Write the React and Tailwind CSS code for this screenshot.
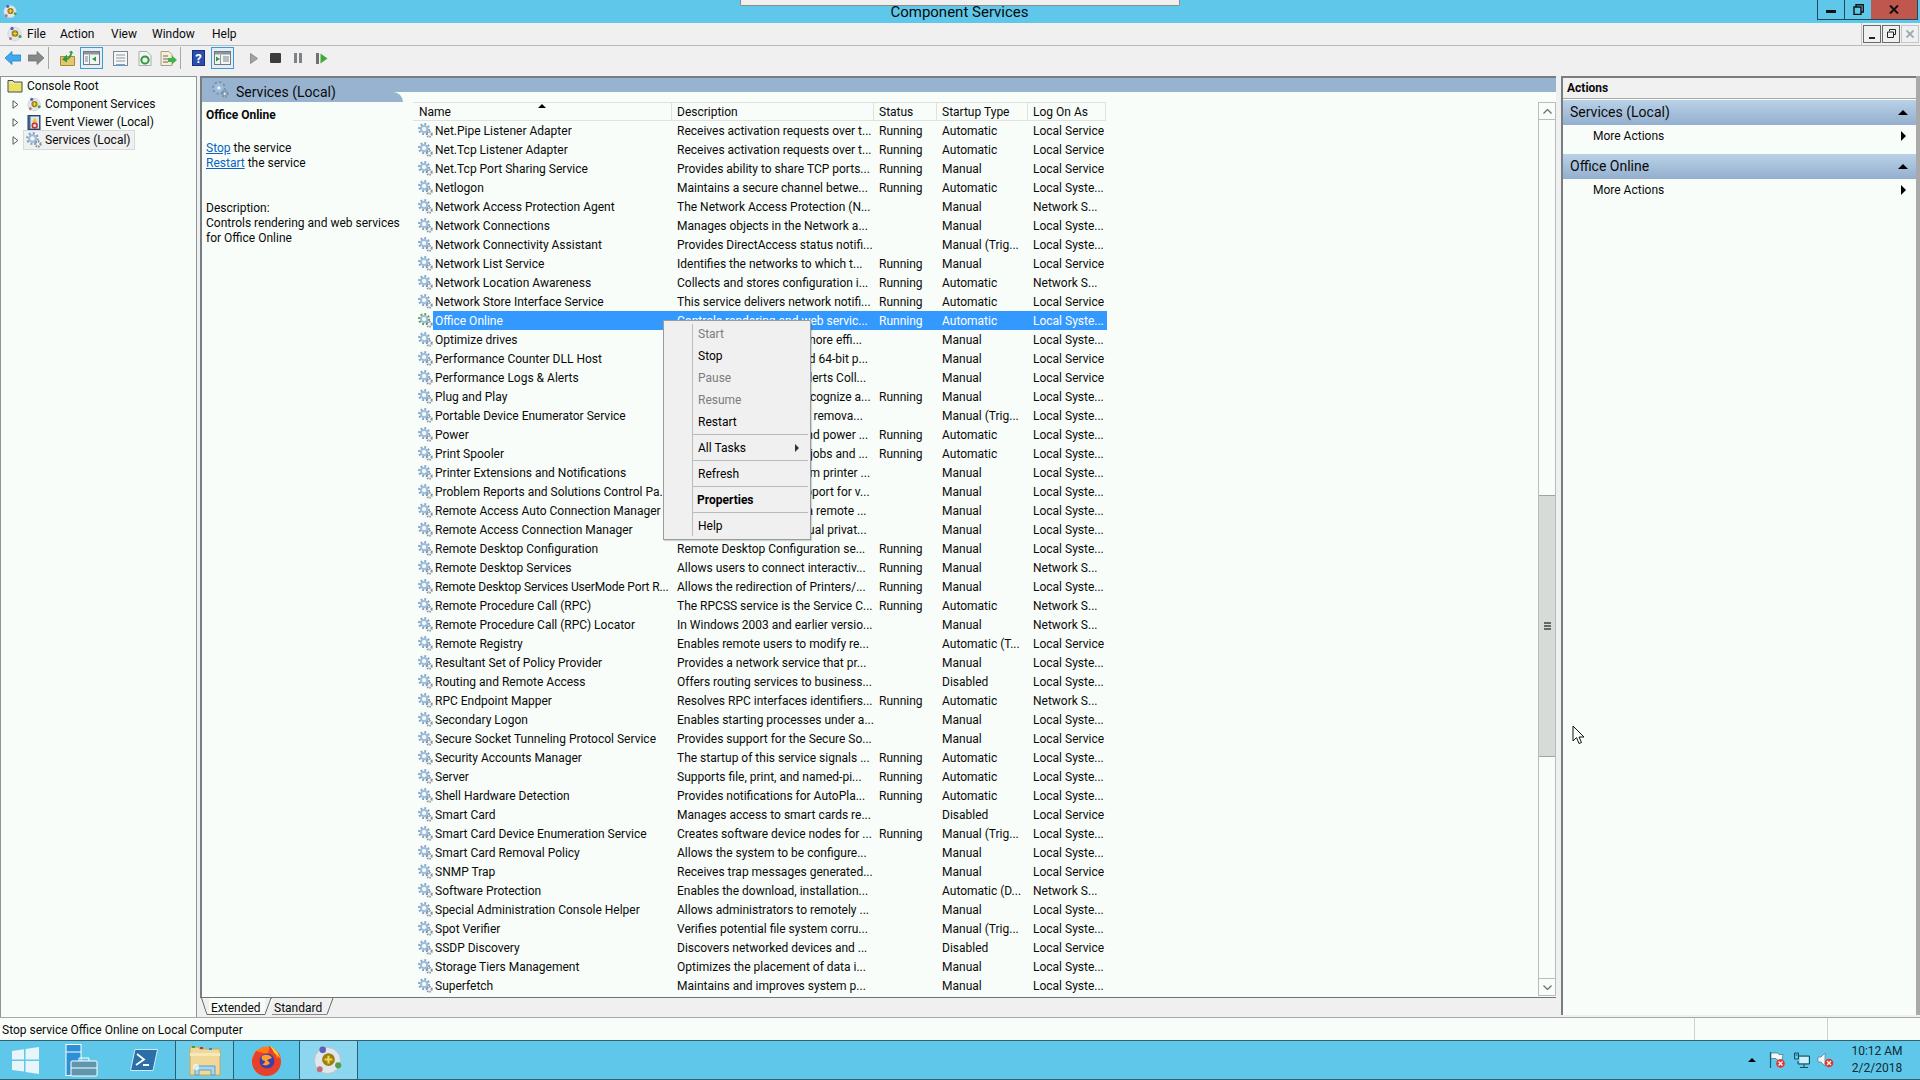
const services = [
  ["Net.Pipe Listener Adapter", "Receives activation requests over t...", "Running", "Automatic", "Local Service"],
  ["Net.Tcp Listener Adapter", "Receives activation requests over t...", "Running", "Automatic", "Local Service"],
  ["Net.Tcp Port Sharing Service", "Provides ability to share TCP ports...", "Running", "Manual", "Local Service"],
  ["Netlogon", "Maintains a secure channel betwe...", "Running", "Automatic", "Local Syste..."],
  ["Network Access Protection Agent", "The Network Access Protection (N...", "", "Manual", "Network S..."],
  ["Network Connections", "Manages objects in the Network a...", "", "Manual", "Local Syste..."],
  ["Network Connectivity Assistant", "Provides DirectAccess status notifi...", "", "Manual (Trig...", "Local Syste..."],
  ["Network List Service", "Identifies the networks to which t...", "Running", "Manual", "Local Service"],
  ["Network Location Awareness", "Collects and stores configuration i...", "Running", "Automatic", "Network S..."],
  ["Network Store Interface Service", "This service delivers network notifi...", "Running", "Automatic", "Local Service"],
  ["Office Online", "Controls rendering and web servic...", "Running", "Automatic", "Local Syste..."],
  ["Optimize drives", "Helps the computer run more effi...", "", "Manual", "Local Syste..."],
  ["Performance Counter DLL Host", "Enables remote users and 64-bit p...", "", "Manual", "Local Service"],
  ["Performance Logs & Alerts", "Performance Logs and Alerts Coll...", "", "Manual", "Local Service"],
  ["Plug and Play", "Enables a computer to recognize a...", "Running", "Manual", "Local Syste..."],
  ["Portable Device Enumerator Service", "Enforces group policy for remova...", "", "Manual (Trig...", "Local Syste..."],
  ["Power", "Manages power policy and power ...", "Running", "Automatic", "Local Syste..."],
  ["Print Spooler", "This service spools print jobs and ...", "Running", "Automatic", "Local Syste..."],
  ["Printer Extensions and Notifications", "This service opens custom printer ...", "", "Manual", "Local Syste..."],
  ["Problem Reports and Solutions Control Pa...", "This service provides support for v...", "", "Manual", "Local Syste..."],
  ["Remote Access Auto Connection Manager", "Creates a connection to a remote ...", "", "Manual", "Local Syste..."],
  ["Remote Access Connection Manager", "Manages dial-up and virtual privat...", "", "Manual", "Local Syste..."],
  ["Remote Desktop Configuration", "Remote Desktop Configuration se...", "Running", "Manual", "Local Syste..."],
  ["Remote Desktop Services", "Allows users to connect interactiv...", "Running", "Manual", "Network S..."],
  ["Remote Desktop Services UserMode Port R...", "Allows the redirection of Printers/...", "Running", "Manual", "Local Syste..."],
  ["Remote Procedure Call (RPC)", "The RPCSS service is the Service C...", "Running", "Automatic", "Network S..."],
  ["Remote Procedure Call (RPC) Locator", "In Windows 2003 and earlier versio...", "", "Manual", "Network S..."],
  ["Remote Registry", "Enables remote users to modify re...", "", "Automatic (T...", "Local Service"],
  ["Resultant Set of Policy Provider", "Provides a network service that pr...", "", "Manual", "Local Syste..."],
  ["Routing and Remote Access", "Offers routing services to business...", "", "Disabled", "Local Syste..."],
  ["RPC Endpoint Mapper", "Resolves RPC interfaces identifiers...", "Running", "Automatic", "Network S..."],
  ["Secondary Logon", "Enables starting processes under a...", "", "Manual", "Local Syste..."],
  ["Secure Socket Tunneling Protocol Service", "Provides support for the Secure So...", "", "Manual", "Local Service"],
  ["Security Accounts Manager", "The startup of this service signals ...", "Running", "Automatic", "Local Syste..."],
  ["Server", "Supports file, print, and named-pi...", "Running", "Automatic", "Local Syste..."],
  ["Shell Hardware Detection", "Provides notifications for AutoPla...", "Running", "Automatic", "Local Syste..."],
  ["Smart Card", "Manages access to smart cards re...", "", "Disabled", "Local Service"],
  ["Smart Card Device Enumeration Service", "Creates software device nodes for ...", "Running", "Manual (Trig...", "Local Syste..."],
  ["Smart Card Removal Policy", "Allows the system to be configure...", "", "Manual", "Local Syste..."],
  ["SNMP Trap", "Receives trap messages generated...", "", "Manual", "Local Service"],
  ["Software Protection", "Enables the download, installation...", "", "Automatic (D...", "Network S..."],
  ["Special Administration Console Helper", "Allows administrators to remotely ...", "", "Manual", "Local Syste..."],
  ["Spot Verifier", "Verifies potential file system corru...", "", "Manual (Trig...", "Local Syste..."],
  ["SSDP Discovery", "Discovers networked devices and ...", "", "Disabled", "Local Service"],
  ["Storage Tiers Management", "Optimizes the placement of data i...", "", "Manual", "Local Syste..."],
  ["Superfetch", "Maintains and improves system p...", "", "Manual", "Local Syste..."],
];

const columns = [
  { label: "Name", cls: "w-[259px] pl-[6px]" },
  { label: "Description", cls: "w-[202px] pl-[5px]" },
  { label: "Status", cls: "w-[63px] pl-[5px]" },
  { label: "Startup Type", cls: "w-[91px] pl-[5px]" },
  { label: "Log On As", cls: "w-[78px] pl-[5px]" },
];

function Gear({ size = 14, accent = "#7fa3c8", small = "#7f8f9c" }) {
  return (
    <svg width={size} height={size} viewBox="0 0 16 16" className="shrink-0">
      <circle cx="6.5" cy="6.5" r="5.3" fill="none" stroke={accent} strokeWidth="2.2" strokeDasharray="2 2.1" />
      <circle cx="6.5" cy="6.5" r="3.4" fill="none" stroke="#9fbcdb" strokeWidth="2.2" />
      <circle cx="6.5" cy="6.5" r="1.6" fill="#f4f9fc" />
      <circle cx="12" cy="12" r="2.6" fill="none" stroke={small} strokeWidth="2.2" strokeDasharray="1.4 1" />
      <circle cx="12" cy="12" r="0.9" fill="#f4f9fc" />
    </svg>
  );
}

function ComponentIcon({ size = 16 }) {
  return (
    <svg width={size} height={size} viewBox="0 0 32 32" className="shrink-0">
      <circle cx="15" cy="16" r="13.5" fill="#dfe6ec" stroke="#b9c3cc" />
      <circle cx="10" cy="5" r="3.4" fill="#5d5fb8" />
      <circle cx="26" cy="21" r="3.2" fill="#4f9e4a" />
      <circle cx="7" cy="25" r="3" fill="#c26d78" />
      <circle cx="16" cy="15" r="6.6" fill="#9a8212" />
      <path d="M16 11v8M12 15h8" stroke="#f5d84a" strokeWidth="2.2" />
    </svg>
  );
}

function Folder() {
  return (
    <svg width="16" height="14" viewBox="0 0 16 14" className="shrink-0">
      <path d="M1 3V1.5h5L7 3h8v10H1z" fill="#e9e2a8" stroke="#4a4a3a" />
      <rect x="2" y="5" width="12" height="7" fill="#e8e35a" />
    </svg>
  );
}

function EventIcon() {
  return (
    <svg width="14" height="15" viewBox="0 0 14 15" className="shrink-0">
      <rect x="1" y="0.5" width="12" height="14" fill="#41689c" stroke="#2a4066" />
      <rect x="3.5" y="1.5" width="8.5" height="12" fill="#dfe6ef" />
      <path d="M7.7 2.5l2.6 4.5H5.1z" fill="#efc232" />
      <circle cx="7.7" cy="10.5" r="2.4" fill="none" stroke="#c8352c" strokeWidth="1.6" />
    </svg>
  );
}

function Expander() {
  return (
    <svg width="7" height="9" viewBox="0 0 7 9" className="shrink-0">
      <path d="M1 .7v7.6L5.8 4.5z" fill="#fff" stroke="#555" />
    </svg>
  );
}

function TreeRow({ icon, label, selected }) {
  return (
    <div className="h-[18px] flex items-center pl-[11px]">
      <Expander />
      <span className="w-[5px]" />
      <div className={`flex items-center h-[18px] pl-[2px] pr-[3px] ${selected ? "bg-[#f0f0f0] outline outline-[#d9d9d9]" : ""}`}>
        <span className="w-[16px] mr-[3px] flex justify-center">{icon}</span>
        {label}
      </div>
    </div>
  );
}

function ToolBox({ children }) {
  return (
    <div className="w-[23px] h-[22px] flex items-center justify-center border border-[#3c9bd2] bg-[#e4eef6]">
      {children}
    </div>
  );
}

function PaneIcon({ side }) {
  return (
    <svg width="17" height="14" viewBox="0 0 17 14">
      <rect x="0.5" y="0.5" width="16" height="13" fill="#f4f4f4" stroke="#6e7a82" />
      <rect x="1" y="1" width="15" height="2.5" fill="#8a969e" />
      <path d="M6.5 4v9" stroke="#8a969e" />
      {side === "left" ? (
        <>
          <path d="M2 6h3M2 8h3M2 10h3" stroke="#7b8790" />
          <path d="M13 5.5v5l-4-2.5z" fill="#2f9a3c" />
        </>
      ) : (
        <>
          <path d="M2 5.5v5l4-2.5z" fill="#2f9a3c" />
          <path d="M9 6h6M9 8h6M9 10h6" stroke="#7b8790" />
        </>
      )}
    </svg>
  );
}

function Toolbar() {
  return (
    <div className="h-[30px] flex items-center bg-[#f0f0f0] pl-[5px] pb-[6px] shrink-0">
      <svg width="16" height="14" viewBox="0 0 16 14">
        <path d="M0 7l7-6.5V4h9v6H7v3.5z" fill="#3fa9ef" stroke="#1d78c0" strokeWidth=".7" />
      </svg>
      <svg width="16" height="14" viewBox="0 0 16 14" className="ml-[7px]">
        <path d="M16 7L9 .5V4H0v6h9v3.5z" fill="#85898a" stroke="#6a6e6f" strokeWidth=".7" />
      </svg>
      <div className="w-px h-[22px] bg-[#a8a8a8] ml-[4px]" />
      <svg width="15" height="15" viewBox="0 0 15 15" className="ml-[11px]">
        <path d="M.5 5.5h14v9H.5z" fill="#e7c66c" stroke="#a48a3c" />
        <path d="M3 9L8 4V7.5C10 7 11 4 11.5 2L9.5 2 12.5 0 14.5 3l-1.500-.5C13 6 10 9 8 9.500V12z" fill="#2e9a3e" transform="translate(-1,-0.5)" />
      </svg>
      <div className="ml-[5px]"><ToolBox><PaneIcon side="left" /></ToolBox></div>
      <svg width="15" height="15" viewBox="0 0 15 15" className="ml-[10px]">
        <rect x="0.5" y="0.5" width="14" height="14" fill="#f6f6f6" stroke="#7a868e" />
        <path d="M3 4h9M3 7h9M3 10h9" stroke="#8b979f" />
        <rect x="3" y="13" width="9" height="1.500" fill="#6ba6d3" />
      </svg>
      <svg width="14" height="15" viewBox="0 0 14 15" className="ml-[10px]">
        <path d="M1 .5h8l4 4v10H1z" fill="#f4f4f4" stroke="#a7adb2" />
        <circle cx="7" cy="9" r="3.600" fill="none" stroke="#2f9a3c" strokeWidth="2" />
      </svg>
      <svg width="17" height="15" viewBox="0 0 17 15" className="ml-[8px]">
        <path d="M1 .5h8l3 3v11H1z" fill="#f6efd6" stroke="#a7a08a" />
        <path d="M3 5h5M3 8h5M3 11h5" stroke="#666" />
        <path d="M8 7h4V4.500L17 9l-5 4.500V11H8z" fill="#47b04b" />
      </svg>
      <div className="w-px h-[22px] bg-[#a8a8a8] ml-[3px]" />
      <div className="ml-[11px] w-[13px] h-[16px] bg-[#2b4fb0] border border-[#1c2f78] flex items-center justify-center text-white text-[13px] font-bold leading-none">?</div>
      <div className="ml-[6px]"><ToolBox><PaneIcon side="right" /></ToolBox></div>
      <svg width="8" height="11" viewBox="0 0 8 11" className="ml-[16px]">
        <path d="M.5.5v10L7.500 5.500z" fill="#a0a4a6" stroke="#8a8e90" />
      </svg>
      <div className="ml-[12px] w-[11px] h-[10px] bg-[#3c3c3c] rounded-[1px]" />
      <div className="ml-[13px] w-[8px] h-[10px] flex justify-between">
        <span className="w-[3px] bg-[#7c8286]" />
        <span className="w-[3px] bg-[#7c8286]" />
      </div>
      <svg width="12" height="11" viewBox="0 0 12 11" className="ml-[14px]">
        <rect x="0" y="0" width="3" height="11" fill="#6c7276" />
        <path d="M4.500.5v10l7-5z" fill="#3cab3c" />
      </svg>
    </div>
  );
}

function ServiceRow({ row }) {
  const selected = row[0] === "Office Online";
  const tight = row[0].includes("UserMode");
  const cell = `shrink-0 h-[19px] flex items-center pl-[5px] ${selected ? "bg-[#3399ff]" : ""}`;
  return (
    <div className={`flex h-[19px] items-center whitespace-nowrap ${selected ? "text-white" : ""}`}>
      <div className="w-[259px] flex items-center shrink-0">
        <span className="w-[5px] shrink-0" />
        <Gear size={15} accent={selected ? "#58a048" : "#7fa3c8"} />
        <span className={`flex-1 h-[19px] flex items-center pl-[2px] ${selected ? "bg-[#3399ff]" : ""} ${tight ? "tracking-[-0.15px]" : ""}`}>{row[0]}</span>
      </div>
      <div className={`w-[202px] ${cell}`}>{row[1]}</div>
      <div className={`w-[63px] ${cell}`}>{row[2]}</div>
      <div className={`w-[91px] ${cell}`}>{row[3]}</div>
      <div className={`w-[79px] ${cell}`}>{row[4]}</div>
    </div>
  );
}

function ScrollBar() {
  return (
    <div className="w-[18px] shrink-0 border-x border-[#b9bdb9] flex flex-col mt-[10px] mb-px">
      <div className="h-[18px] border-y border-[#b9bdb9] flex items-center justify-center">
        <svg width="9" height="5" viewBox="0 0 9 5"><path d="M.5 4.500l4-4 4 4" fill="none" stroke="#6f6f6f" strokeWidth="1.300" /></svg>
      </div>
      <div className="h-[375px]" />
      <div className="h-[262px] bg-[#d7dbd8] border-y border-[#a0a3a0] flex items-center justify-center">
        <div className="w-[7px] flex flex-col gap-px">
          <span className="h-[2px] bg-[#666]" />
          <span className="h-[2px] bg-[#666]" />
          <span className="h-[2px] bg-[#666]" />
        </div>
      </div>
      <div className="flex-1" />
      <div className="h-[18px] border-y border-[#b9bdb9] flex items-center justify-center">
        <svg width="9" height="5" viewBox="0 0 9 5"><path d="M.5.5l4 4 4-4" fill="none" stroke="#6f6f6f" strokeWidth="1.300" /></svg>
      </div>
    </div>
  );
}

function MenuItem({ label, disabled, bold, arrow, tall }) {
  return (
    <div className={`flex items-center justify-between pr-[11px] ${tall ? "h-[23px]" : "h-[22px]"} ${disabled ? "text-[#7d7d7d]" : ""} ${bold ? "font-bold pl-[4px]" : "pl-[5px]"}`}>
      {label}
      {arrow && <span className="w-0 h-0 border-y-[4px] border-y-transparent border-l-[4px] border-l-[#333]" />}
    </div>
  );
}

function MenuSep() {
  return <div className="h-px bg-[#b9b9b9] my-[1px] mr-[2px]" />;
}

function ContextMenu() {
  return (
    <div className="absolute left-[663px] top-[320px] w-[148px] h-[220px] bg-[#f0f0f0] border border-[#9b9b9b] text-black shadow-[1px_1px_1px_rgba(0,0,0,0.15)] flex">
      <div className="w-[29px] shrink-0 border-r border-[#bcbcbc] my-[3px]" />
      <div className="flex-1 pt-[2px] flex flex-col">
        <MenuItem label="Start" disabled />
        <MenuItem label="Stop" />
        <MenuItem label="Pause" disabled />
        <MenuItem label="Resume" disabled />
        <MenuItem label="Restart" />
        <MenuSep />
        <MenuItem label="All Tasks" arrow tall />
        <MenuSep />
        <MenuItem label="Refresh" tall />
        <MenuSep />
        <MenuItem label="Properties" bold tall />
        <MenuSep />
        <MenuItem label="Help" tall />
      </div>
    </div>
  );
}

function ActionSection({ title }) {
  return (
    <div className="flex flex-col">
      <div className="h-[25px] flex items-center justify-between pl-[7px] pr-[8px] text-[14px] bg-gradient-to-b from-[#b9d2e8] to-[#94afce]">
        {title}
        <span className="w-0 h-0 border-x-[5px] border-x-transparent border-b-[5px] border-b-black" />
      </div>
      <div className="h-[29px] pb-[7px] flex items-center justify-between pl-[30px] pr-[10px]">
        More Actions
        <span className="w-0 h-0 border-y-[5px] border-y-transparent border-l-[5px] border-l-black" />
      </div>
    </div>
  );
}

function TaskSlot({ active, children }) {
  return (
    <div className={`w-[59px] h-full flex items-center justify-center ${active === "a" ? "bg-[#6ecde9] border-x border-[#2c5f70]" : ""} ${active === "b" ? "bg-[#8dd6ef] border-x border-[#2c5f70]" : ""}`}>
      {children}
    </div>
  );
}

function Taskbar() {
  return (
    <div className="h-[40px] shrink-0 bg-[#5fc8ea] border-y border-[#35616f] flex items-center">
      <div className="w-[50px] h-full flex items-center justify-center">
        <svg width="27" height="27" viewBox="0 0 27 27">
          <path d="M0 4l12-1.800v10.300H0zM13.500 2L27 0v12.500H13.500zM0 14h12v10.500L0 23zM13.500 14H27v13l-13.500-2z" fill="#e8f6fb" />
        </svg>
      </div>
      <div className="w-[62px] h-full flex items-center justify-center">
        <svg width="33" height="33" viewBox="0 0 33 33">
          <rect x="1" y="0.500" width="15" height="31" fill="#2d8fd5" stroke="#fff" />
          <path d="M1 8h15" stroke="#fff" />
          <rect x="6" y="17" width="26" height="15" rx="1" fill="#5f96ad" stroke="#fff" />
          <path d="M14 17v-3h10v3M6 24h26" fill="none" stroke="#fff" />
        </svg>
      </div>
      <div className="w-[63px] h-full flex items-center justify-center">
        <svg width="28" height="22" viewBox="0 0 28 22">
          <path d="M5 0.500h22.500L23 21.500H.5z" fill="#2a6fa8" stroke="#cfe8f5" />
          <path d="M7 5l7 5.500L6 16M13 16h6" fill="none" stroke="#fff" strokeWidth="1.800" />
        </svg>
      </div>
      <TaskSlot active="a">
        <svg width="32" height="32" viewBox="0 0 32 32">
          <path d="M1 3h8l2 2h20v26H1z" fill="#efd89a" stroke="#c8a858" />
          <rect x="3" y="2" width="3" height="2" fill="#3aa63a" />
          <rect x="11" y="3" width="3" height="2" fill="#c8352c" />
          <rect x="20" y="4" width="3" height="2" fill="#2d8fd5" />
          <path d="M1 9h30v3H1z" fill="#f7e8b8" />
          <path d="M6 31V22h20v9h-4v-5H10v5z" fill="#a8d6ee" stroke="#5b9ec2" />
          <circle cx="7" cy="23" r="3" fill="#fff" opacity=".7" />
        </svg>
      </TaskSlot>
      <div className="w-[65px] h-full flex items-center justify-center">
        <svg width="31" height="31" viewBox="0 0 31 31">
          <circle cx="15.500" cy="16" r="14.500" fill="#ff7a1a" />
          <path d="M5 6C3 10 1 13 1 16c0 9 6.500 15 14.500 15S30 25 30 16c0-3-1-6-3-9 1 4-1 7-1 7-1-6-5-11-8-14 1 4 0 7-2 9z" fill="#e8402a" />
          <path d="M18 0c5 3 10 8 12 15-2-4-5-6-7-7-1-3-3-6-5-8z" fill="#ffce2e" />
          <circle cx="16" cy="16" r="7.500" fill="#3a3fb0" />
          <path d="M11 11c3-2 8-2 10 2l-5 2 3 3c-2 3-6 3-8 1 2 0 3-1 3-3-3 0-4-3-3-5z" fill="#ff9e2c" />
        </svg>
      </div>
      <TaskSlot active="b">
        <ComponentIcon size={31} />
      </TaskSlot>
      <div className="flex-1" />
      <span className="w-0 h-0 border-x-[4px] border-x-transparent border-b-[4px] border-b-black mr-[13px]" />
      <svg width="17" height="17" viewBox="0 0 17 17" className="mr-[8px]">
        <path d="M1.500 0v16" stroke="#1c5a6e" strokeWidth="1.200" />
        <path d="M2 1h7l1 1.500h4L13 8H8L7 6.500H2z" fill="#f2f8fb" stroke="#2b5f70" strokeWidth=".6" />
        <circle cx="11.500" cy="11.500" r="4.300" fill="#e2332e" />
        <path d="M9.500 9.500l4 4m0-4l-4 4" stroke="#fff" strokeWidth="1.200" />
      </svg>
      <svg width="16" height="16" viewBox="0 0 16 16" className="mr-[7px]">
        <path d="M.5 1h4v6h-4zM1.500 3h2M5 4h10.500v8H4V9" fill="none" stroke="#134b5e" />
        <rect x="5.500" y="5" width="9" height="6" fill="#d8eef6" />
        <path d="M10 12v3M6 15.500h8" stroke="#134b5e" />
      </svg>
      <svg width="17" height="16" viewBox="0 0 17 16" className="mr-[12px]">
        <path d="M1 5h3l4-4v13L4 10H1z" fill="#f2f8fb" stroke="#5a7a86" strokeWidth=".7" />
        <circle cx="12" cy="11" r="4.300" fill="#e2332e" />
        <path d="M10 9l4 4m0-4l-4 4" stroke="#fff" strokeWidth="1.200" />
      </svg>
      <div className="w-[62px] mr-[12px] flex flex-col items-center text-[12px] leading-[17px] text-[#0f2a33]">
        <span>10:12 AM</span>
        <span>2/2/2018</span>
      </div>
    </div>
  );
}

export default function App() {
  return (
    <div className="relative w-[1920px] h-[1080px] overflow-hidden flex flex-col bg-[#f0f0f0] text-[#0a0a0a] text-[12px] font-['Roboto','Liberation_Sans',sans-serif]">
      {/* title bar */}
      <div className="h-[23px] shrink-0 bg-[#5fc8ea] flex items-start">
        <div className="w-[20px] h-[23px] flex items-center justify-center"><ComponentIcon size={15} /></div>
        <div className="flex-1 text-center text-[15px] leading-[24px] pl-[82px]">Component Services</div>
        <div className="flex h-[20px] mr-[2px] border border-t-0 border-[#20495a]">
          <div className="w-[27px] border-r border-[#20495a] flex items-center justify-center">
            <span className="w-[10px] h-[3px] bg-[#111] mt-[3px]" />
          </div>
          <div className="w-[26px] flex items-center justify-center">
            <svg width="11" height="11" viewBox="0 0 11 11"><path d="M3 2.500V.700h7.300V8H8.500M1 3h7v7.500H1z" fill="none" stroke="#111" strokeWidth="1.400" /></svg>
          </div>
          <div className="w-[46px] bg-[#c0574e] flex items-center justify-center">
            <svg width="10" height="9" viewBox="0 0 10 9"><path d="M1 .5l8 8m0-8l-8 8" stroke="#111" strokeWidth="2" /></svg>
          </div>
        </div>
      </div>
      <div className="absolute left-[740px] top-0 w-[440px] h-[6px] bg-[#efefef] border border-t-0 border-[#8b8b8b] rounded-b-[2px]" />

      {/* menu bar */}
      <div className="h-[23px] shrink-0 flex items-center border-b border-[#b9b9b9]">
        <div className="w-[27px] flex justify-center pl-[2px]"><ComponentIcon size={16} /></div>
        <div className="flex">
          <span className="w-[33px]">File</span>
          <span className="w-[51px]">Action</span>
          <span className="w-[41px]">View</span>
          <span className="w-[60px]">Window</span>
          <span>Help</span>
        </div>
        <div className="flex-1" />
        <div className="h-full border-l border-[#c6c6c6] flex items-center gap-px pl-px pb-px pr-px">
          <div className="w-[18px] h-[18px] border border-[#6a6a6a] flex items-end justify-center pb-[3px]"><span className="w-[6px] h-[2px] bg-[#222]" /></div>
          <div className="w-[18px] h-[18px] border border-[#6a6a6a] flex items-center justify-center">
            <svg width="9" height="9" viewBox="0 0 9 9"><path d="M2.500 2V.500h6v5H7M.500 3h6v5.500h-6z" fill="none" stroke="#222" /></svg>
          </div>
          <div className="w-[18px] h-[18px] border border-[#c6c6c6] flex items-center justify-center">
            <svg width="8" height="8" viewBox="0 0 8 8"><path d="M.5.5l7 7m0-7l-7 7" stroke="#9aa7b2" strokeWidth="1.800" /></svg>
          </div>
        </div>
      </div>

      <Toolbar />

      {/* panes */}
      <div className="flex-1 min-h-0 flex">
        <div className="w-[197px] shrink-0 bg-[#f8fdf9] border-l border-r border-t border-[#8f9498]">
          <div className="h-[18px] flex items-center pl-[6px]">
            <Folder />
            <span className="ml-[4px]">Console Root</span>
          </div>
          <TreeRow icon={<ComponentIcon size={15} />} label="Component Services" />
          <TreeRow icon={<EventIcon />} label="Event Viewer (Local)" />
          <TreeRow icon={<Gear size={16} />} label="Services (Local)" selected />
        </div>

        <div className="w-[3px] shrink-0" />

        <div className="w-[1356px] shrink-0 flex flex-col mb-[2px]">
          <div className="flex-1 min-h-0 flex flex-col border-l-2 border-t-2 border-[#777d80] bg-[#f8fdf9]">
            <div className="relative z-10 h-[14px] bg-[#98b3d0] flex items-start pl-[10px] pt-[3px]">
              <Gear size={17} accent="#6f93b8" small="#7d8d9a" />
              <span className="ml-[7px] mt-[3px] text-[14px] leading-[16px]">Services (Local)</span>
            </div>
            <div className="flex-1 min-h-0 flex">
              <div className="w-[201px] shrink-0 relative pl-[4px] pt-[16px] leading-[15px]">
                <div className="absolute left-0 top-0 w-full h-[10px] bg-[#98b3d0] rounded-tr-[10px]" />
                <div className="font-bold">Office Online</div>
                <div className="mt-[18px]"><span className="text-[#0b62c4] underline">Stop</span> the service</div>
                <div><span className="text-[#0b62c4] underline">Restart</span> the service</div>
                <div className="mt-[30px]">Description:</div>
                <div>Controls rendering and web services for Office Online</div>
              </div>
              <div className="flex-1 min-w-0 flex">
                <div className="w-[10px] shrink-0" />
                <div className="flex-1 min-w-0 flex flex-col pt-[10px]">
                  <div className="relative h-[19px] flex shrink-0 w-[693px] border-y border-[#dfe3df]">
                    {columns.map((c) => (
                      <div key={c.label} className={`${c.cls} shrink-0 border-r border-[#dfe3df] flex items-center`}>{c.label}</div>
                    ))}
                    <span className="absolute left-[125px] top-[1px] w-0 h-0 border-x-[4px] border-x-transparent border-b-[4px] border-b-black" />
                  </div>
                  <div className="flex-1 min-h-0 overflow-hidden w-[694px]">
                    {services.map((row) => (
                      <ServiceRow key={row[0]} row={row} />
                    ))}
                  </div>
                </div>
                <ScrollBar />
              </div>
            </div>
          </div>
          <div className="h-[18px] shrink-0 border-t border-[#6f7476] flex pl-[1px] text-[12px]">
            <div className="h-[17px] flex">
              <svg width="8" height="17" viewBox="0 0 8 17"><path d="M.5 0L6 16.500h2" fill="#f8fdf9" stroke="#666" /></svg>
              <div className="w-[56px] bg-[#f8fdf9] border-b border-[#666] pt-[3px] leading-[15px] pl-[2px]">Extended</div>
              <svg width="9" height="17" viewBox="0 0 9 17"><path d="M0 16.500L6 0h3" fill="#f8fdf9" stroke="#666" /></svg>
              <div className="w-[55px] pt-[3px] leading-[15px] pl-[2px] bg-[#f0f0f0] border-b border-[#888] -ml-[2px]">Standard</div>
              <svg width="7" height="17" viewBox="0 0 7 17"><path d="M0 16.500L6 0" fill="none" stroke="#666" /></svg>
            </div>
          </div>
        </div>

        <div className="w-[5px] shrink-0" />

        <div className="w-[355px] shrink-0 mb-[2px] flex flex-col bg-[#f8fdf9] border-l-2 border-t-2 border-[#777d80]">
          <div className="h-[21px] bg-[#f1f1f1] border-b border-[#a6a6a6] font-bold flex items-center pl-[4px] mb-[1px]">Actions</div>
          <ActionSection title="Services (Local)" />
          <ActionSection title="Office Online" />
        </div>
        <div className="flex-1 bg-[#a9a9a9] mb-[2px]" />
      </div>

      {/* status bar */}
      <div className="h-[23px] shrink-0 bg-[#f8fdf9] border-t border-[#a8a8a8] flex items-center">
        <div className="w-[1695px] h-full flex items-center pl-[2px] pt-px border-r border-[#cfd3cf]">Stop service Office Online on Local Computer</div>
        <div className="w-[133px] h-full border-r border-[#cfd3cf]" />
      </div>

      <Taskbar />

      <ContextMenu />

      {/* mouse pointer */}
      <svg width="14" height="21" viewBox="0 0 14 21" className="absolute left-[1572px] top-[725px]">
        <path d="M1 1v15l3.500-3.500L7 18.500l2.500-1-2.500-5.500h5z" fill="#fff" stroke="#111" />
      </svg>
    </div>
  );
}
